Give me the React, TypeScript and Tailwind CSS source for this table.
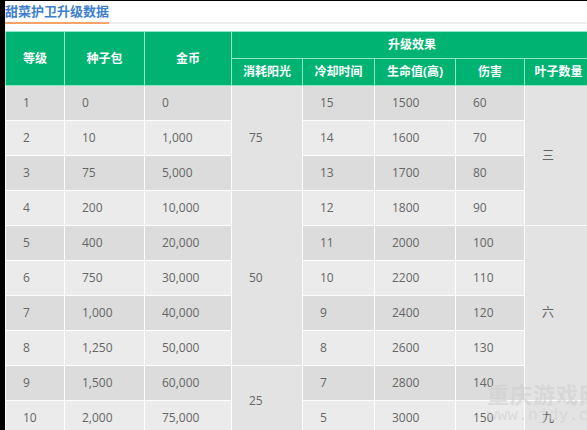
const rows = [
  { lv: "1", seed: "0", gold: "0", cd: "15", hp: "1500", dmg: "60" },
  { lv: "2", seed: "10", gold: "1,000", cd: "14", hp: "1600", dmg: "70" },
  { lv: "3", seed: "75", gold: "5,000", cd: "13", hp: "1700", dmg: "80" },
  { lv: "4", seed: "200", gold: "10,000", cd: "12", hp: "1800", dmg: "90" },
  { lv: "5", seed: "400", gold: "20,000", cd: "11", hp: "2000", dmg: "100" },
  { lv: "6", seed: "750", gold: "30,000", cd: "10", hp: "2200", dmg: "110" },
  { lv: "7", seed: "1,000", gold: "40,000", cd: "9", hp: "2400", dmg: "120" },
  { lv: "8", seed: "1,250", gold: "50,000", cd: "8", hp: "2600", dmg: "130" },
  { lv: "9", seed: "1,500", gold: "60,000", cd: "7", hp: "2800", dmg: "140" },
  { lv: "10", seed: "2,000", gold: "75,000", cd: "5", hp: "3000", dmg: "150" },
];

// 合并单元格: 行号 -> [内容, 跨行数]
const sunCells: Record<number, [string, number]> = { 0: ["75", 3], 3: ["50", 5], 8: ["25", 2] };
const leafCells: Record<number, [string, number]> = { 0: ["三", 4], 4: ["六", 5], 9: ["九", 1] };

const td = "h-[35px] border border-white pl-[17px] text-left align-middle";
const th = "border border-[#8ee8c6] text-center font-bold text-white";

export default function App() {
  return (
    <div
      className="relative h-[430px] w-[587px] overflow-hidden border-l-[5px] border-t border-black bg-white"
      style={{ fontFamily: '"Open Sans", "Noto Sans CJK SC", sans-serif' }}
    >
      <div className="flex h-[23px] border-b-2 border-[#eeeeee]">
        <div className="-mb-[2px] border-b-2 border-[#f5a26b] pt-[1px] text-[13px] leading-[18px] font-bold text-[#3f7fd0]">
          甜菜护卫升级数据
        </div>
      </div>

      <table className="mt-[7px] w-[587px] table-fixed border-collapse text-[12px] text-[#666]">
        <colgroup>
          <col className="w-[59px]" />
          <col className="w-[80px]" />
          <col className="w-[87px]" />
          <col className="w-[71px]" />
          <col className="w-[72px]" />
          <col className="w-[81px]" />
          <col className="w-[69px]" />
          <col className="w-[68px]" />
        </colgroup>
        <thead className="bg-[#00b373]">
          <tr className="h-[27px]">
            <th rowSpan={2} className={th}>等级</th>
            <th rowSpan={2} className={th}>种子包</th>
            <th rowSpan={2} className={th}>金币</th>
            <th colSpan={5} className={th}>升级效果</th>
          </tr>
          <tr className="h-[27px]">
            <th className={th}>消耗阳光</th>
            <th className={th}>冷却时间</th>
            <th className={th}>生命值(高)</th>
            <th className={th}>伤害</th>
            <th className={th}>叶子数量</th>
          </tr>
        </thead>
        <tbody>
          {rows.map((r, i) => {
            const bg = i % 2 === 0 ? "bg-[#dcdcdc]" : "bg-[#ebebeb]";
            return (
              <tr key={r.lv} className={bg}>
                <td className={td}>{r.lv}</td>
                <td className={td}>{r.seed}</td>
                <td className={td}>{r.gold}</td>
                {sunCells[i] && (
                  <td rowSpan={sunCells[i][1]} className={`${td} bg-[#e3e3e3]`}>
                    {sunCells[i][0]}
                  </td>
                )}
                <td className={td}>{r.cd}</td>
                <td className={td}>{r.hp}</td>
                <td className={td}>{r.dmg}</td>
                {leafCells[i] && (
                  <td rowSpan={leafCells[i][1]} className={`${td} bg-[#e3e3e3]`}>
                    {leafCells[i][0]}
                  </td>
                )}
              </tr>
            );
          })}
        </tbody>
      </table>

      {/* 水印 */}
      <div className="pointer-events-none absolute top-[379px] left-[482px] flex flex-col items-start text-[#cfcfcf]/60">
        <span className="text-[22px] leading-[26px] font-bold tracking-[1px]" style={{ fontFamily: '"Noto Sans CJK SC", sans-serif' }}>
          重庆游戏网
        </span>
        <span className="text-[17px] leading-[20px]" style={{ fontFamily: '"Liberation Mono", monospace' }}>
          www.njdy.com
        </span>
      </div>
    </div>
  );
}
